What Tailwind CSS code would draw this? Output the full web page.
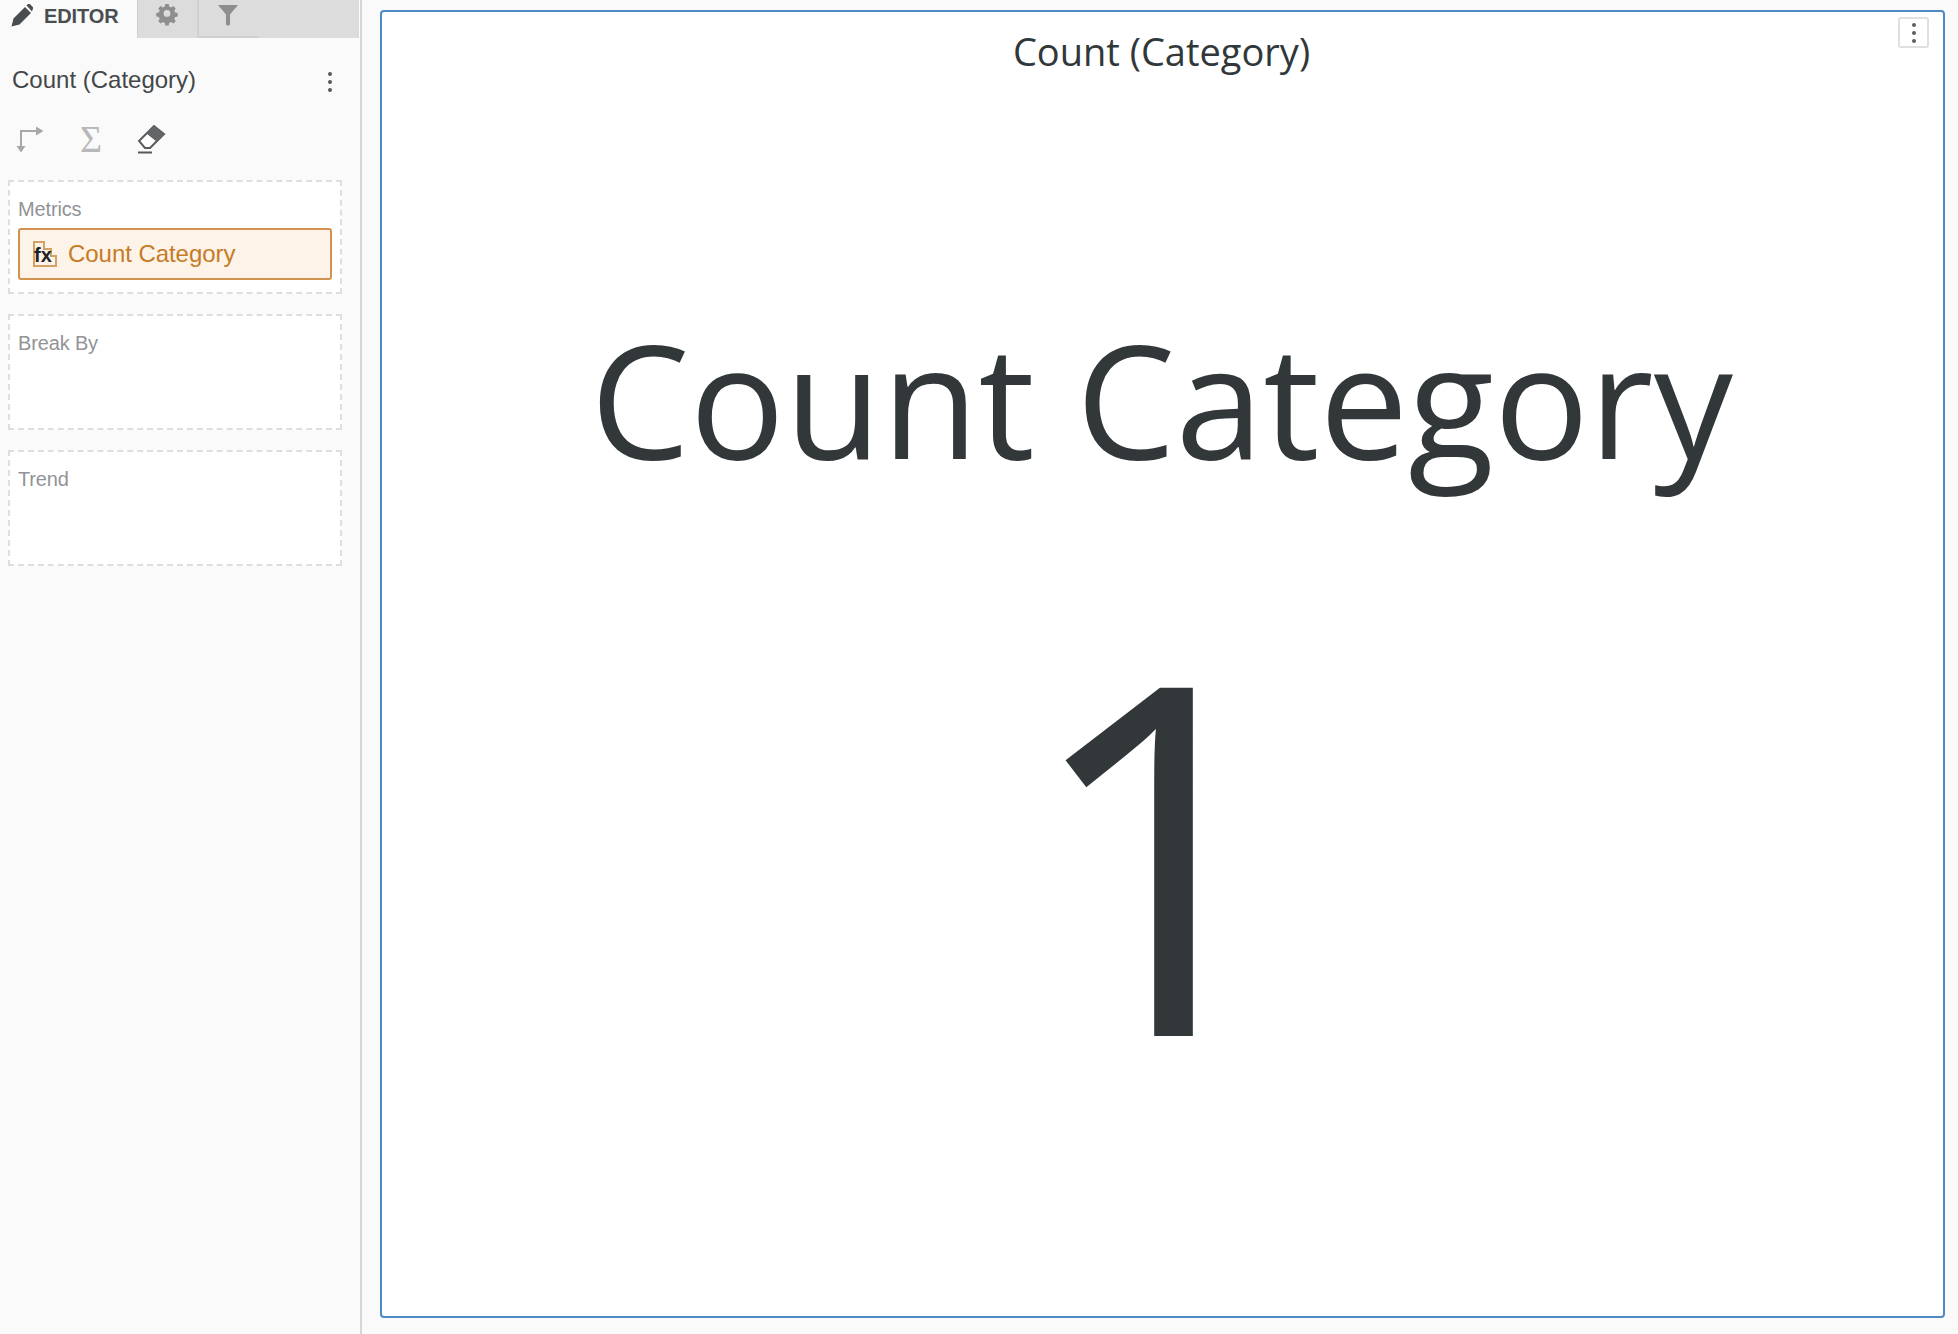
<!DOCTYPE html>
<html lang="en">
<head>
  <meta charset="UTF-8" />
  <title>Count (Category)</title>
  <script src="https://cdn.jsdelivr.net/npm/@tailwindcss/browser@4"></script>
</head>
<body class="w-[1958px] h-[1334px] overflow-hidden bg-[#fafafa] font-['Liberation_Sans',Arial,sans-serif]">
  <div class="flex h-full">
    <!-- Editor sidebar -->
    <aside class="w-[362px] h-full shrink-0 border-r-2 border-[#d6d6d6] pr-[1px]">
      <div class="flex h-[38px]">
        <div class="w-[137px] flex items-center pl-[11px] gap-[11px] pb-[6px]">
          <svg class="w-[22px] h-[24px]" viewBox="0 0 22 24" fill="#4a4d50"><path d="M0.500 22.500 L2.500 14.500 L14 3 L20 9 L8.500 20.500 Z"/><path d="M15.500 1.500 L17 0 C17.800 -0.500 18.500 -0.300 19 0.200 L21.800 3 C22.300 3.600 22.300 4.300 21.800 5 L21 7.500 Z"/></svg>
          <span class="text-[20px] font-bold text-[#4a4d50] tracking-[-0.1px]">EDITOR</span>
        </div>
        <div class="flex-1 flex bg-[#dcdcdc] border-l border-[#cfcfcf]">
          <div class="w-[61px] h-full flex justify-center pr-[2px] pt-[2px] border-r-2 border-[#d0d0d0]">
            <svg class="w-[24px] h-[24px]" viewBox="0 0 24 24" fill="#8e8e8e"><path fill-rule="evenodd" d="M10 1h4l.6 3 2.300 1 2.600-1.700 2.800 2.800-1.700 2.600 1 2.300 3 .6v4l-3 .6-1 2.300 1.700 2.600-2.800 2.800-2.600-1.700-2.300 1-.6 3h-4l-.6-3-2.300-1-2.600 1.700-2.800-2.800 1.700-2.600-1-2.300-3-.6v-4l3-.6 1-2.300L1.700 6.100l2.800-2.800 2.600 1.700 2.300-1z M12 8a4 4 0 1 0 0 8 4 4 0 0 0 0-8z" transform="translate(1.800 1.200) scale(.85)"/></svg>
          </div>
          <div class="w-[60px] h-full flex justify-center pr-[2px] pt-[5px] border-b-2 border-[#d0d0d0]">
            <svg class="w-[20px] h-[22px]" viewBox="0 0 20 22" fill="#8e8e8e"><path d="M0 0 H20 L12 9.500 V19 C12 21 8 21 8 19 V9.500 Z"/></svg>
          </div>
        </div>
      </div>

      <div class="flex items-center justify-between pl-[12px] pr-[27px] mt-[25px]">
        <span class="text-[24px] leading-[34px] text-[#44474a]">Count (Category)</span>
        <span class="flex flex-col gap-[4px] mt-[4px]">
          <i class="block w-[4px] h-[4px] rounded-full bg-[#55585b]"></i>
          <i class="block w-[4px] h-[4px] rounded-full bg-[#55585b]"></i>
          <i class="block w-[4px] h-[4px] rounded-full bg-[#55585b]"></i>
        </span>
      </div>

      <div class="flex items-center pl-[16px] gap-[33px] mt-[27px] h-[30px]">
        <svg class="w-[28px] h-[28px]" viewBox="0 0 28 28" fill="none"><path d="M5 25V6H25" stroke="#a8a8a8" stroke-width="2"/><path d="M20 1.500 27.500 6 20 10.500z M0.500 21 5 27.500 9.500 21z" fill="#a8a8a8"/></svg>
        <span class="w-[28px] text-center text-[38px] leading-[30px] text-[#b8b8b8] font-['Liberation_Serif',serif]">Σ</span>
        <svg class="w-[28px] h-[30px]" viewBox="0 0 28 30"><path d="M1 17 L16 2 L26 10 L12 24 H7 Z" fill="#fff" stroke="#58595b" stroke-width="2"/><path d="M8.500 9.500 L16 2 L26.500 10.500 L19 18 Z" fill="#646567"/><path d="M0 28.500 H14" stroke="#55585b" stroke-width="2"/></svg>
      </div>

      <div class="flex flex-col gap-[20px] mt-[26px] ml-[8px] mr-[17px]">
        <section class="h-[114px] border-2 border-dashed border-[#dedede] bg-white px-[8px] pt-[15px]">
          <h3 class="text-[20px] leading-[24px] font-normal text-[#919396] tracking-[-0.15px]">Metrics</h3>
          <div class="mt-[7px] h-[52px] flex items-center gap-[11px] pl-[13px] rounded-[3px] border-2 border-[#d3924f] bg-[#fdf3e8]">
            <span class="relative w-[24px] h-[26px] shrink-0">
              <svg class="absolute inset-0 w-[24px] h-[26px]" viewBox="0 0 24 26" fill="none"><path d="M1 1H11V8H18V15H23V25H1Z" stroke="#d3a165" stroke-width="2"/></svg>
              <span class="absolute left-[1px] top-[4px] text-[20px] leading-[20px] font-bold text-[#1f2225]">fx</span>
            </span>
            <span class="text-[24px] text-[#c77b26] tracking-[-0.05px]">Count Category</span>
          </div>
        </section>
        <section class="h-[116px] border-2 border-dashed border-[#dedede] bg-white px-[8px] pt-[15px]">
          <h3 class="text-[20px] leading-[24px] font-normal text-[#919396] tracking-[-0.15px]">Break By</h3>
        </section>
        <section class="h-[116px] border-2 border-dashed border-[#dedede] bg-white px-[8px] pt-[15px]">
          <h3 class="text-[20px] leading-[24px] font-normal text-[#919396] tracking-[-0.15px]">Trend</h3>
        </section>
      </div>
    </aside>

    <!-- Widget -->
    <main class="flex-1 pl-[18px] pr-[13px] pt-[10px] pb-[16px]">
      <div class="relative h-full flex flex-col items-center bg-white border-2 border-[#4d8ac5] rounded-[4px] font-['Open_Sans',sans-serif] text-[#32373a]">
        <div class="absolute top-[5px] right-[14px] w-[31px] h-[31px] flex flex-col items-center justify-center gap-[4px] rounded-[3px] border-2 border-[#e0e0e0] bg-white">
          <i class="block w-[4px] h-[4px] rounded-full bg-[#5d5f61]"></i>
          <i class="block w-[4px] h-[4px] rounded-full bg-[#5d5f61]"></i>
          <i class="block w-[4px] h-[4px] rounded-full bg-[#5d5f61]"></i>
        </div>
        <h2 class="text-[38px] leading-[60px] mt-[9px] mr-[2px] font-normal">Count (Category)</h2>
        <p class="text-[158px] leading-[200px] mt-[217px] mr-[2px]">Count Category</p>
        <p class="text-[488px] leading-[500px] mt-[99px] mr-[3px]">1</p>
      </div>
    </main>
  </div>
</body>
</html>
